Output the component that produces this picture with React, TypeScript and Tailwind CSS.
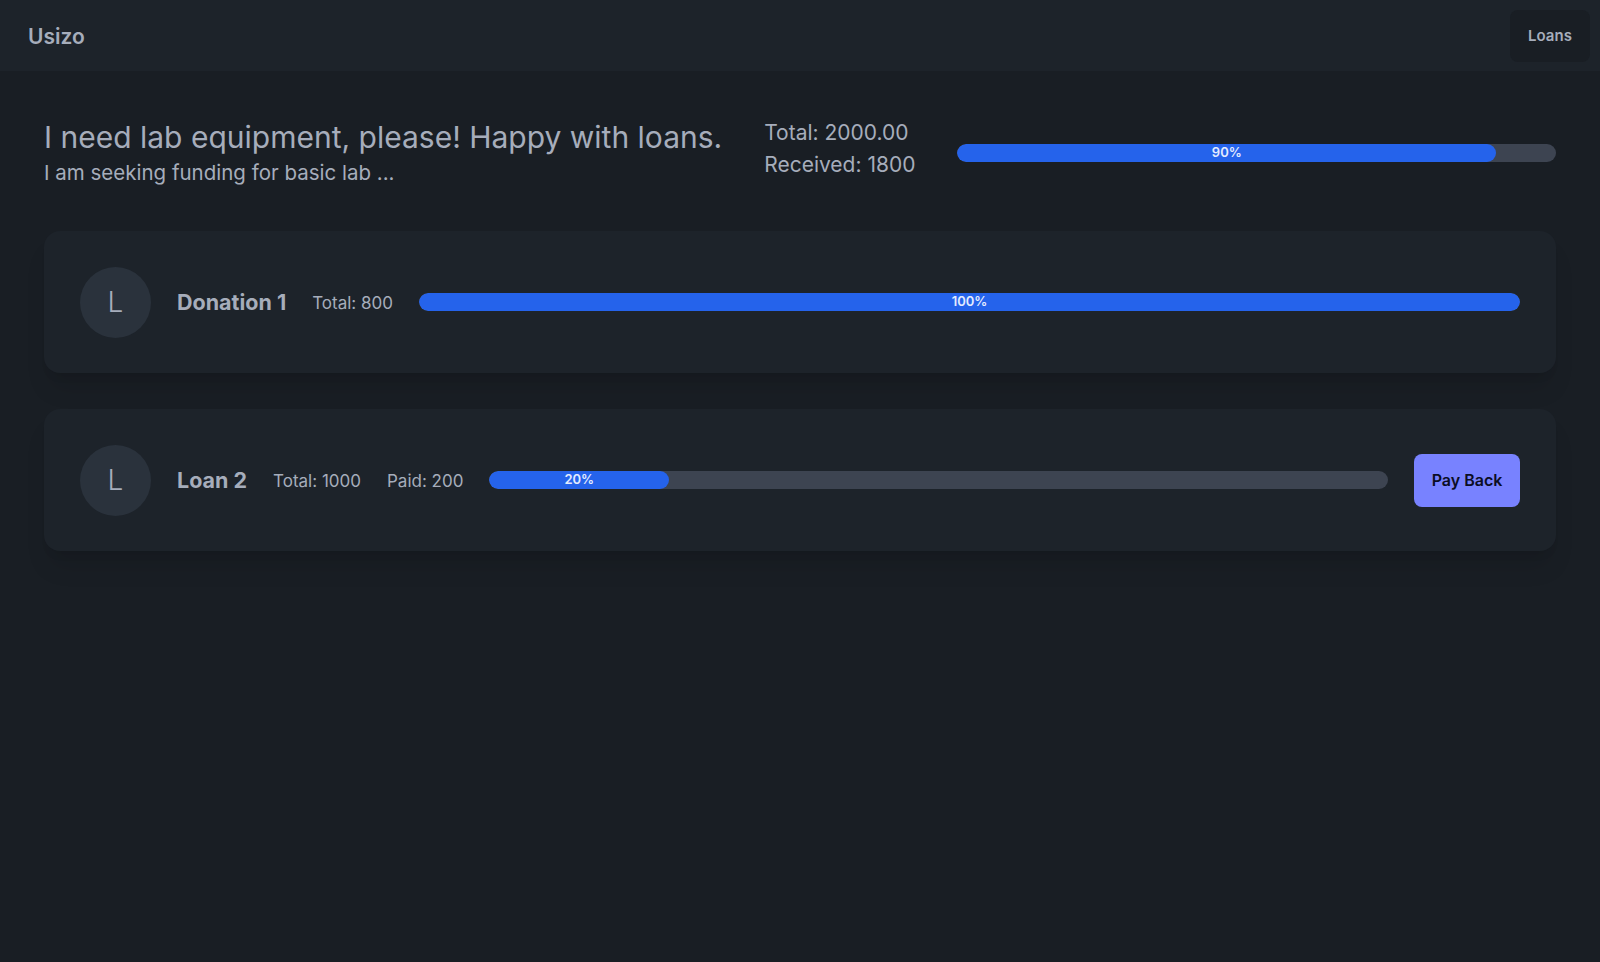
import React from 'react';

type Entry = {
  id: number;
  title: string;
  total: number;
  paid?: number;
  percent: number;
  payBack?: boolean;
};

const ENTRIES: Entry[] = [
  { id: 1, title: 'Donation 1', total: 800, percent: 100 },
  { id: 2, title: 'Loan 2', total: 1000, paid: 200, percent: 20, payBack: true },
];

function Progress({ percent }: { percent: number }) {
  return (
    <div className="relative h-[18px] flex-1 overflow-hidden rounded-full bg-[#3d4451]">
      <div
        className="flex h-full items-center justify-center rounded-full bg-[#2563eb] text-[13px] font-semibold text-[#e3ebff]"
        style={{ width: `${percent}%` }}
      >
        {percent}%
      </div>
    </div>
  );
}

export default function App() {
  return (
    <div className="min-h-[962px] bg-[#191e24] text-[#a6adbb] font-['Inter','Liberation_Sans',sans-serif]">
      {/* Navbar */}
      <header className="flex h-[71px] items-center justify-between bg-[#1d232a] pl-[28px] pr-[10px]">
        <span className="pt-[3px] text-[21px] font-semibold">Usizo</span>
        <button className="h-[52px] w-[80px] rounded-lg bg-[#191e24] pt-[2px] text-[15px] font-semibold">
          Loans
        </button>
      </header>

      <main className="px-[44px] pt-[46px]">
        {/* Request summary */}
        <div className="flex items-center gap-[42px]">
          <div>
            <h1 className="text-[30px] leading-[36px]">I need lab equipment, please! Happy with loans.</h1>
            <p className="mt-1 text-[20.5px] leading-7">I am seeking funding for basic lab ...</p>
          </div>
          <div className="pb-[8px] text-[21px] leading-[32px]">
            <div>Total: 2000.00</div>
            <div>Received: 1800</div>
          </div>
          <Progress percent={90} />
        </div>

        {/* Entries */}
        <div className="mt-[42px] flex flex-col gap-9">
          {ENTRIES.map((entry) => (
            <div
              key={entry.id}
              className="flex h-[142px] items-center gap-[26px] rounded-2xl bg-[#1d232a] px-9 shadow-xl"
            >
              <div className="flex h-[71px] w-[71px] shrink-0 items-center justify-center rounded-full bg-[#2a323c] text-[28px] font-light">
                L
              </div>
              <span className="text-[21.5px] font-bold">{entry.title}</span>
              <span className="pt-[3px] text-[17px]">Total: {entry.total}</span>
              {entry.paid !== undefined && <span className="pt-[3px] text-[17px]">Paid: {entry.paid}</span>}
              <Progress percent={entry.percent} />
              {entry.payBack && (
                <button className="h-[53px] w-[106px] rounded-lg bg-[#7882ff] text-base font-semibold text-[#0b0d24]">
                  Pay Back
                </button>
              )}
            </div>
          ))}
        </div>
      </main>
    </div>
  );
}
